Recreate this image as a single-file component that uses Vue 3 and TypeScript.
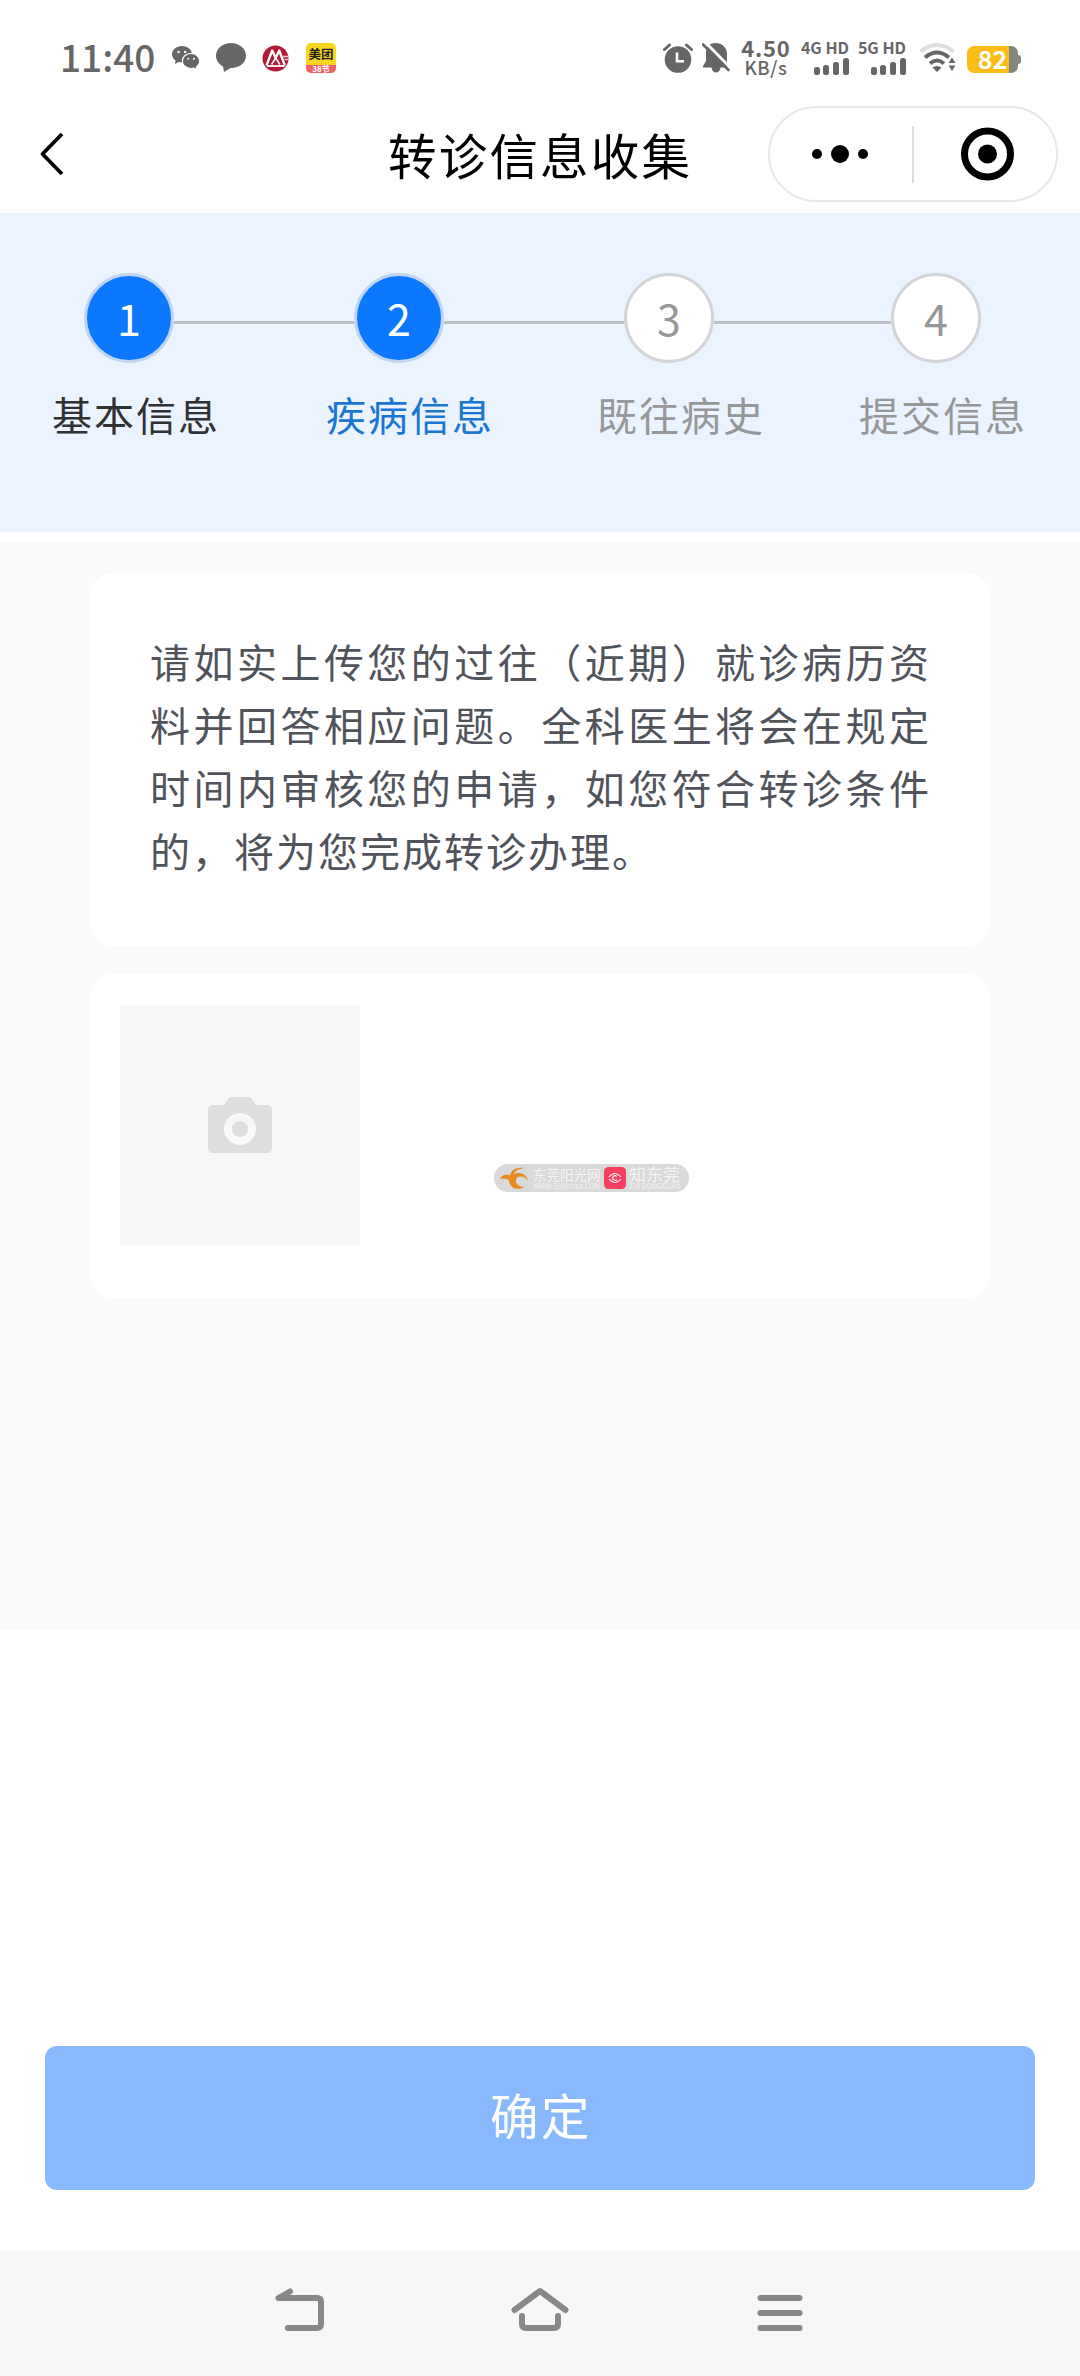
<script setup lang="ts">
interface Step {
  label: string
  state: 'done' | 'current' | 'todo'
}

const steps: Step[] = [
  { label: '基本信息', state: 'done' },
  { label: '疾病信息', state: 'current' },
  { label: '既往病史', state: 'todo' },
  { label: '提交信息', state: 'todo' },
]

const networks: string[] = ['4G HD', '5G HD']
</script>

<template>
  <div class="screen">
    <header class="status">
      <span class="clock">11:40</span>
      <svg class="wechat" width="28" height="24" viewBox="0 0 28 24">
        <path d="M10 0C4.400 0 0 3.700 0 8.300c0 2.600 1.400 4.800 3.600 6.300L2.800 18l4-2c1 .3 2.100.4 3.200.4C15.600 16.400 20 12.800 20 8.300S15.600 0 10 0z" fill="#666" />
        <path d="M19 7.500c-4.900 0-8.700 3.300-8.700 7.500s3.800 7.500 8.700 7.500c1 0 2-.2 2.900-.4l3.300 1.600-.7-2.800c2-1.400 3.300-3.500 3.300-5.900 0-4.200-3.900-7.500-8.800-7.500z" fill="#666" stroke="#fff" stroke-width="1.200" />
        <g fill="#fff"><circle cx="6.600" cy="6" r="1.200" /><circle cx="13.200" cy="6" r="1.200" /><circle cx="16.200" cy="12.800" r="1" /><circle cx="22" cy="12.800" r="1" /></g>
      </svg>
      <svg class="bubble" width="30" height="30" viewBox="0 0 30 30">
        <path d="M15 0C6.700 0 0 5.600 0 12.800c0 4.400 2.800 8.400 7 10.700L8 29l6.500-4C23.200 25.300 30 20 30 12.800 30 5.600 23.300 0 15 0z" fill="#666" />
      </svg>
      <svg class="bank" width="27" height="27" viewBox="0 0 27 27">
        <circle cx="13.500" cy="13.500" r="13" fill="#b01c38" />
        <path d="M4.500 20.500L10.200 5.500l3.500 7.500 3.500-7.500 5.700 15" fill="none" stroke="#fff" stroke-width="2.300" stroke-linejoin="round" />
        <path d="M9.500 19.500l4.200-6.500 4.200 6.500" fill="none" stroke="#fff" stroke-width="1.500" />
        <path d="M5 21h17.500" stroke="#fff" stroke-width="1.800" />
        <path d="M21 11.500h6M22.500 14.500h4.500" stroke="#f3c4cc" stroke-width="1.500" />
      </svg>
      <span class="meituan"><span class="mt-name">美团</span><span class="mt-fest">38节</span></span>
      <span class="spacer"></span>
      <svg class="alarm" width="30" height="30" viewBox="0 0 30 30">
        <circle cx="15" cy="16.500" r="13.300" fill="#666" />
        <path d="M1.500 6.500l5-4.500M28.500 6.500l-5-4.500" stroke="#666" stroke-width="3" stroke-linecap="round" />
        <path d="M14 9.500v8.700h7" fill="none" stroke="#fff" stroke-width="2.600" />
      </svg>
      <svg class="bell" width="28" height="32" viewBox="0 0 28 32">
        <path d="M13.500 1C7.800 1 4 5 4 10.500V19l-3 5v1.500h8.500c.5 3.500 2.200 5 4.500 5s4-1.500 4.500-5H25V11C24.500 5 19.500 1 13.500 1z" fill="#666" />
        <path d="M2.800-.2L29 26.300" stroke="#fff" stroke-width="3" />
        <path d="M1 2.500L26.500 28" stroke="#666" stroke-width="2.600" stroke-linecap="round" />
      </svg>
      <span class="speed"><b>4.50</b><i>KB/s</i></span>
      <span v-for="net in networks" :key="net" class="net">
        <b>{{ net }}</b>
        <svg width="36" height="17" viewBox="0 0 36 17" fill="#666">
          <rect x="1" y="9" width="6" height="8" rx="2.500" />
          <rect x="10" y="7" width="6" height="10" rx="2.500" />
          <rect x="20" y="4" width="6" height="13" rx="2.500" />
          <rect x="30" y="0" width="6" height="17" rx="2.500" />
        </svg>
      </span>
      <svg class="wifi" width="38" height="30" viewBox="0 0 38 30">
        <g fill="none" stroke-width="4">
          <path d="M1.500 8.500Q18-4.500 34.500 8.500" stroke="#ddd" />
          <path d="M6 14.500Q18 4.500 30 14.500" stroke="#666" />
          <path d="M11 20.500Q18 14.500 25 20.500" stroke="#666" />
        </g>
        <path d="M13.500 24.500q4.500-3 9 0L18 29zM29.500 20l3.500-5.500 3.500 5.500zM29.500 22.500h7L33 28z" fill="#666" />
      </svg>
      <span class="battery"><span>82</span></span>
    </header>

    <nav class="titlebar">
      <svg class="back" width="28" height="46" viewBox="0 0 28 46">
        <path d="M24 3L4.500 23 24 43" fill="none" stroke="#000" stroke-width="3.800" stroke-linejoin="round" />
      </svg>
      <h1>转诊信息收集</h1>
      <div class="capsule">
        <svg width="286" height="92" viewBox="0 0 286 92">
          <circle cx="47" cy="46" r="5" />
          <circle cx="70" cy="46" r="9" />
          <circle cx="93" cy="46" r="5" />
          <path d="M143 18v57" stroke="#dcdcdc" stroke-width="2" />
          <circle cx="217.500" cy="46" r="23" fill="none" stroke="#000" stroke-width="7" />
          <circle cx="217.500" cy="46" r="9.500" />
        </svg>
      </div>
    </nav>

    <section class="steps">
      <div v-for="(step, i) in steps" :key="step.label" class="step" :class="step.state">
        <div class="track">
          <span class="dot">{{ i + 1 }}</span>
          <span v-if="i < steps.length - 1" class="line"></span>
        </div>
        <span class="label">{{ step.label }}</span>
      </div>
    </section>

    <main class="content">
      <section class="card notice">
        <p>请如实上传您的过往（近期）就诊病历资料并回答相应问题。全科医生将会在规定时间内审核您的申请，如您符合转诊条件的，将为您完成转诊办理。</p>
      </section>
      <section class="card upload">
        <div class="picker">
          <svg width="64" height="56" viewBox="0 0 64 56">
            <path d="M5 8h11l3.500-5.500Q21 0 23 0h18q2 0 3.500 2.500L48 8h11q5 0 5 5v38q0 5-5 5H5q-5 0-5-5V13q0-5 5-5z" fill="#dcdee0" />
            <circle cx="32" cy="32" r="12" fill="none" stroke="#f7f8fa" stroke-width="8" />
          </svg>
        </div>
        <div class="mark">
          <svg width="30" height="24" viewBox="0 0 30 24">
            <path d="M0 13C2 9 6 8 10 9.500 11 4 16 1 25 2c-6 .5-10 2.500-11.500 6.500C19 5 27 8 28 15c-1.500-3-4.500-5-8-4.500-4 .5-5.500 5-2.500 8 1.500 1.500 4 2.500 7 2.500-8 4-15 1-15.500-7C6 12.500 3 12 0 13z" fill="#e8891c" />
          </svg>
          <span class="mark-text"><b>东莞阳光网</b><small>WWW.SUN0769.COM</small></span>
          <svg width="22" height="22" viewBox="0 0 22 22">
            <rect width="22" height="22" rx="4.500" fill="#f43f60" />
            <g fill="none" stroke="#fff" stroke-width="1.100"><path d="M5 10q6-7 12 0M5 12q6 7 12 0" /><path d="M12.800 9.400a2.400 2.400 0 1 0 0 3.200" /></g>
          </svg>
          <span class="mark-text second"><b>知东莞</b><small>ZHI DONGGUAN</small></span>
        </div>
      </section>
    </main>

    <footer class="submit"><button type="button">确定</button></footer>

    <nav class="system">
      <svg width="60" height="60" viewBox="0 0 60 60">
        <path d="M20 21.500L8.500 28H47q4 0 4 4v22q0 4-4 4H18" />
      </svg>
      <svg width="60" height="60" viewBox="0 0 60 60">
        <path d="M4.500 40L30 21l25.500 19M12 46v8q0 4 4 4h28q4 0 4-4v-8" />
      </svg>
      <svg width="60" height="60" viewBox="0 0 60 60">
        <path d="M10.500 28h39M10.500 43h39M10.500 58h39" />
      </svg>
    </nav>
  </div>
</template>

<style>
body {
  margin: 0;
  background: #fff;
}
</style>

<style scoped>
.screen {
  width: 1080px;
  height: 2376px;
  display: flex;
  flex-direction: column;
  overflow: hidden;
  background: #fff;
  font-family: "Noto Sans CJK SC", "Noto Sans", sans-serif;
}
svg {
  display: block;
  flex: none;
}
.status {
  height: 98px;
  box-sizing: border-box;
  padding: 0 59px 0 60px;
  display: flex;
  align-items: flex-start;
  color: #666;
}
.clock {
  width: 112px;
  margin-top: 29px;
  font-size: 37px;
  line-height: 54px;
  font-weight: 500;
}
.wechat { margin-top: 46px; }
.bubble { margin: 43px 0 0 16px; }
.bank { margin: 45px 0 0 16px; }
.meituan {
  width: 30px;
  height: 30px;
  margin: 43px 0 0 17px;
  border-radius: 5px;
  overflow: hidden;
  display: flex;
  flex-direction: column;
  text-align: center;
  background: #f8d521;
}
.mt-name {
  height: 22px;
  font-size: 12.5px;
  line-height: 21px;
  font-weight: 700;
  color: #222;
}
.mt-fest {
  height: 8px;
  font-size: 8px;
  line-height: 7px;
  font-weight: 700;
  color: #fff;
  background: #ee6068;
}
.spacer { flex: 1; }
.alarm { margin: 43px 9px 0 0; }
.bell { margin: 42px 0 0; }
.speed {
  width: 52px;
  margin: 36px 0 0 10px;
  display: flex;
  flex-direction: column;
  align-items: center;
}
.speed b {
  font-size: 22px;
  line-height: 23px;
  font-weight: 700;
  letter-spacing: 0.8px;
}
.speed i {
  font-size: 18.500px;
  line-height: 17px;
  font-style: normal;
  font-weight: 500;
  letter-spacing: 0.6px;
}
.net {
  width: 48px;
  margin: 37px 0 0 9px;
  display: flex;
  flex-direction: column;
  align-items: flex-end;
}
.net b {
  font-size: 16px;
  line-height: 21px;
  font-weight: 700;
  white-space: nowrap;
}
.wifi { margin: 43px 0 0 13px; }
.battery {
  position: relative;
  width: 51px;
  height: 27px;
  margin: 46px 3px 0 10px;
  border-radius: 7px;
  text-align: center;
  background: linear-gradient(90deg, #fbbc16 0 42px, #858585 42px);
}
.battery::after {
  content: "";
  position: absolute;
  left: 51px;
  top: 9px;
  width: 3px;
  height: 9px;
  border-radius: 0 3px 3px 0;
  background: #858585;
}
.battery span {
  display: block;
  font-size: 25px;
  line-height: 24px;
  font-weight: 700;
  color: #fff;
}
.titlebar {
  height: 115px;
  display: flex;
  align-items: flex-start;
}
.back { margin: 33px 0 0 38px; }
h1 {
  width: 320px;
  margin: 21px 0 0 322px;
  font-size: 48.500px;
  line-height: 70px;
  font-weight: 400;
  letter-spacing: 2.200px;
  color: #000;
}
.capsule {
  width: 286px;
  height: 92px;
  margin: 8px 0 0 60px;
  border: 2px solid #e8e8e8;
  border-radius: 48px;
}
.steps {
  height: 319px;
  box-sizing: border-box;
  padding: 60px 0 0 84px;
  display: flex;
  background: #ebf3fe;
}
.step {
  width: 270px;
  flex: none;
  color: #969799;
}
.step:nth-child(3) { width: 267px; }
.step:last-child { width: 90px; }
.track {
  display: flex;
  align-items: center;
}
.dot {
  width: 90px;
  height: 90px;
  box-sizing: border-box;
  flex: none;
  border: 3px solid #d2d4d7;
  border-radius: 50%;
  text-align: center;
  font-size: 43px;
  line-height: 83px;
  background: #fff;
}
.done .dot,
.current .dot {
  border-color: #bfd5f2;
  background: #0c78ff;
  color: #fff;
}
.line {
  flex: 1;
  height: 3px;
  margin-top: 9px;
  background: #bcc0c5;
}
.label {
  display: block;
  width: 172px;
  margin: 22px 0 0 -32px;
  font-size: 40px;
  line-height: 58px;
  letter-spacing: 2px;
}
.done .label { color: #303133; }
.current .label {
  margin-left: -28px;
  color: #1976d2;
}
.step:nth-child(3) .label { margin-left: -27px; }
.step:nth-child(4) .label { margin-left: -32px; }
.content {
  height: 1088px;
  box-sizing: border-box;
  margin-top: 10px;
  padding: 31px 90px 0;
  background: #fafafa;
}
.card {
  box-sizing: border-box;
  border-radius: 24px;
  background: #fff;
}
.notice {
  height: 373px;
  padding: 57px 59px 0 60px;
}
.notice p {
  margin: 0;
  font-size: 40px;
  line-height: 63px;
  letter-spacing: 2px;
  text-align: justify;
  color: #50545a;
}
.upload {
  position: relative;
  height: 324px;
  margin-top: 28px;
  padding: 31px 30px;
}
.picker {
  width: 240px;
  height: 240px;
  display: flex;
  align-items: center;
  justify-content: center;
  background: #f7f8fa;
}
.mark {
  position: absolute;
  left: 404px;
  top: 190px;
  width: 195px;
  height: 28px;
  box-sizing: border-box;
  padding-left: 6px;
  border-radius: 14px;
  display: flex;
  align-items: center;
  background: #d9d9d9;
}
.mark-text {
  width: 68px;
  margin: 0 3px;
  display: flex;
  flex-direction: column;
  color: #f4f4f4;
  white-space: nowrap;
}
.mark-text b {
  font-size: 13.500px;
  line-height: 16px;
  font-weight: 400;
}
.mark-text small {
  font-size: 7px;
  line-height: 8px;
}
.mark-text.second {
  width: 52px;
}
.mark-text.second b {
  font-size: 17px;
}
.submit {
  margin-top: 416px;
  padding: 0 45px;
}
.submit button {
  display: block;
  width: 100%;
  height: 144px;
  padding: 0 0 8px 2px;
  border: 0;
  border-radius: 12px;
  font-family: inherit;
  font-size: 48.500px;
  letter-spacing: 2.500px;
  color: #fff;
  background: #88b9ff;
}
.system {
  height: 126px;
  margin-top: 60px;
  padding: 0 270px;
  display: flex;
  justify-content: space-between;
  background: #f7f7f7;
}
.system svg {
  margin-top: 20px;
  overflow: visible;
  fill: none;
  stroke: #888;
  stroke-width: 6;
  stroke-linecap: round;
  stroke-linejoin: round;
}
</style>
